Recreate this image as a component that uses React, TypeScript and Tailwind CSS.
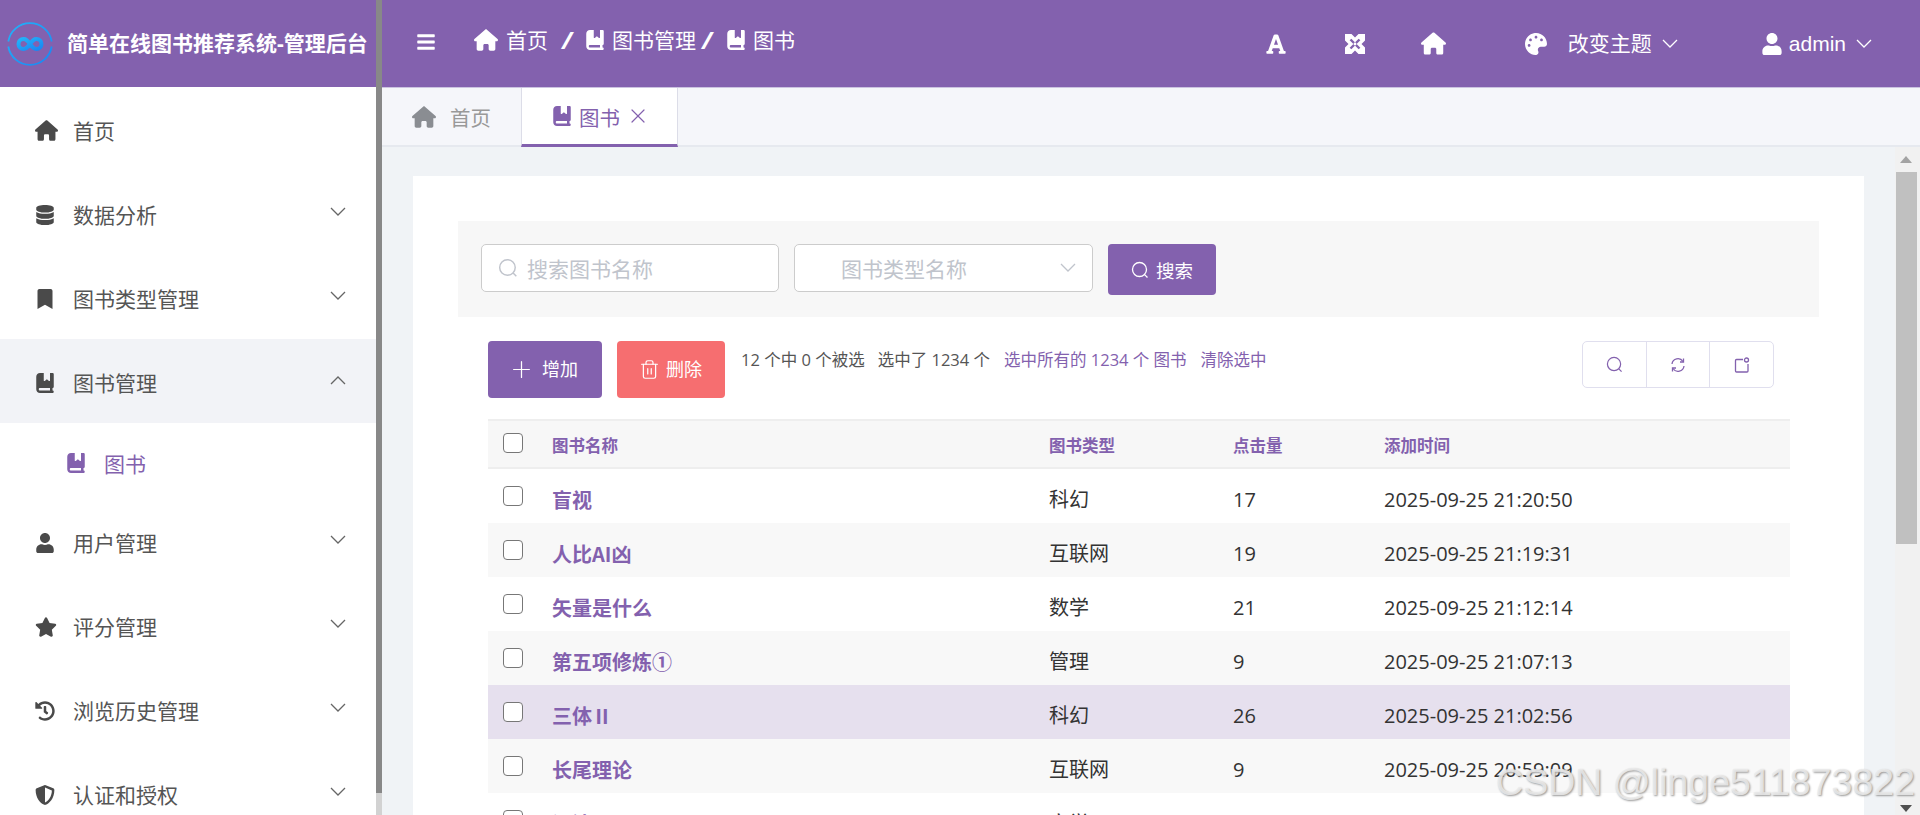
import { useId } from 'react';
import { FaDatabase, FaBookmark, FaUser, FaStar, FaHistory, FaShieldAlt, FaBars, FaFont, FaPalette } from 'react-icons/fa';
import { FaBookBookmark, FaHouse } from 'react-icons/fa6';
import { Plus, Trash2, X } from 'lucide-react';

function Chevron({ up, className }: { up?: boolean; className?: string }) {
  return (
    <svg width="16" height="10" viewBox="0 0 16 10" fill="none" stroke="currentColor" strokeWidth="1.3" className={className}>
      <polyline points={up ? '1,9 8,2 15,9' : '1,1 8,8 15,1'} />
    </svg>
  );
}

function SearchGlyph({ size = 18, className }: { size?: number; className?: string }) {
  return (
    <svg width={size} height={size} viewBox="0 0 18 18" fill="none" stroke="currentColor" strokeWidth="1.3" className={className}>
      <circle cx="8.5" cy="8.5" r="7" />
      <line x1="13.6" y1="13.6" x2="16.5" y2="16.5" />
    </svg>
  );
}

function ExpandIcon({ className }: { className?: string }) {
  return (
    <svg width="20" height="20" viewBox="0 0 20 20" className={className}>
      <rect x="0" y="0" width="20" height="20" fill="#fff" />
      <path d="M6.5 0H13.5L10 3.5ZM6.5 20H13.5L10 16.5ZM0 6.5V13.5L3.5 10ZM20 6.5V13.5L16.5 10Z" fill="#8361ae" />
      <path d="M5.5 5.5L14.5 14.5M14.5 5.5L5.5 14.5" stroke="#8361ae" strokeWidth="2.4" />
      <circle cx="10" cy="10" r="1.4" fill="#fff" />
    </svg>
  );
}

function Logo() {
  const id = useId();
  return (
    <svg width="46" height="46" viewBox="0 0 46 46" fill="none">
      <defs>
        <linearGradient id={id} x1="0" y1="0" x2="1" y2="1">
          <stop offset="0" stopColor="#22b4fa" />
          <stop offset="1" stopColor="#1a86f2" />
        </linearGradient>
      </defs>
      <path d="M1.3 20.5A22 22 0 0 1 44.7 20.5M44.7 25.5A22 22 0 0 1 1.3 25.5" stroke={`url(#${id})`} strokeWidth="1.8" />
      <path d="M23 23C20 19 19 18 16.5 18A5 5 0 0 0 16.5 28C19 28 20 27 23 23C26 19 27 18 29.5 18A5 5 0 0 1 29.5 28C27 28 26 27 23 23Z" stroke={`url(#${id})`} strokeWidth="4" />
    </svg>
  );
}

const menu = [
  { label: '首页', icon: FaHouse, size: 23 },
  { label: '数据分析', icon: FaDatabase, size: 20, arrow: true },
  { label: '图书类型管理', icon: FaBookmark, size: 20, arrow: true },
  { label: '图书管理', icon: FaBookBookmark, size: 20, arrow: true, open: true },
  { label: '用户管理', icon: FaUser, size: 20, arrow: true },
  { label: '评分管理', icon: FaStar, size: 22, arrow: true },
  { label: '浏览历史管理', icon: FaHistory, size: 20, arrow: true },
  { label: '认证和授权', icon: FaShieldAlt, size: 20, arrow: true },
];

const rows = [
  ['盲视', '科幻', '17', '2025-09-25 21:20:50'],
  ['人比AI凶', '互联网', '19', '2025-09-25 21:19:31'],
  ['矢量是什么', '数学', '21', '2025-09-25 21:12:14'],
  ['第五项修炼①', '管理', '9', '2025-09-25 21:07:13'],
  ['三体Ⅱ', '科幻', '26', '2025-09-25 21:02:56'],
  ['长尾理论', '互联网', '9', '2025-09-25 20:59:09'],
  ['混沌', '文学', '20', '2025-09-25 20:50:55'],
];

function Sidebar() {
  return (
    <div className="w-[382px] h-full flex shrink-0">
      <div className="w-[376px] h-full flex flex-col bg-white overflow-hidden">
        <div className="h-[87px] shrink-0 bg-[#8361ae] flex items-center pl-[7px]">
          <Logo />
          <span className="ml-[14px] text-[21px] font-bold text-white whitespace-nowrap">简单在线图书推荐系统-管理后台</span>
        </div>
        {menu.map((m) => (
          <div key={m.label} className="shrink-0">
            <div className={`h-[84px] flex items-center pl-[35px] pr-[30px] pt-[3px] text-[#555] ${m.open ? 'bg-[#f2f3f7]' : ''}`}>
              <span className="w-[38px] flex text-[#4a4a4a]"><m.icon size={m.size} /></span>
              <span className="text-[21px] mt-[3px]">{m.label}</span>
              {m.arrow && <Chevron up={m.open} className="ml-auto -mt-[6px] text-[#666]" />}
            </div>
            {m.open && (
              <div className="h-[76px] flex items-center pl-[66px] pt-[4px] text-[#8361ae]">
                <span className="w-[38px] flex"><FaBookBookmark size={20} /></span>
                <span className="text-[21px] mt-[4px]">图书</span>
              </div>
            )}
          </div>
        ))}
      </div>
      <div className="w-[6px] h-full flex flex-col">
        <div className="h-[793px] bg-[#888]" />
        <div className="flex-1 bg-[#d2d2d2]" />
      </div>
    </div>
  );
}

function TopBar() {
  return (
    <div className="h-[87px] shrink-0 bg-[#8361ae] text-white flex items-center pb-[4px]">
      <FaBars size={20} className="ml-[34px]" />
      <div className="ml-[38px] flex items-center text-[21px] -mt-[3px]">
        <FaHouse size={24} />
        <span className="ml-[8px] mt-[2px]">首页</span>
        <span className="ml-[14px] font-bold italic w-[23px] text-[24px]">/</span>
        <FaBookBookmark size={20} />
        <span className="ml-[7px] mt-[2px]">图书管理</span>
        <span className="ml-[6px] font-bold italic w-[24px] text-[24px]">/</span>
        <FaBookBookmark size={20} />
        <span className="ml-[7px] mt-[2px]">图书</span>
      </div>
      <div className="ml-auto flex items-center pt-[4px]">
        <FaFont size={22} />
        <ExpandIcon className="ml-[58px]" />
        <FaHouse size={25} className="ml-[56px]" />
        <FaPalette size={22} className="ml-[79px]" />
        <span className="ml-[21px] text-[21px]">改变主题</span>
        <Chevron className="ml-[10px]" />
        <FaUser size={22} className="ml-[83px]" />
        <span className="ml-[6px] text-[21px] font-['Liberation_Sans',sans-serif]">admin</span>
        <Chevron className="ml-[10px] mr-[48px]" />
      </div>
    </div>
  );
}

function Tabs() {
  return (
    <div className="h-[60px] shrink-0 bg-[#f5f6fa] border-t border-[#cbc3e0] border-b-2 border-b-[#e6e9ef] flex">
      <div className="w-[139px] flex items-center pl-[30px] text-[#999]">
        <FaHouse size={24} className="text-[#8a8d92]" />
        <span className="ml-[14px] text-[20.5px] mt-[4px]">首页</span>
      </div>
      <div className="w-[157px] h-[59px] bg-white border-x border-[#dcdde8] border-b-[3px] border-b-[#8361ae] flex items-center pl-[30px] text-[#8361ae]">
        <FaBookBookmark size={20} />
        <span className="ml-[7px] text-[20.5px] mt-[4px]">图书</span>
        <X size={24} strokeWidth={1.2} className="ml-[6px]" />
      </div>
    </div>
  );
}

function SearchPanel() {
  return (
    <div className="h-[96px] bg-[#f7f7f7] flex items-start pt-[23px] pl-[23px]">
      <div className="w-[298px] h-[48px] bg-white border border-[#ccc] rounded-[5px] flex items-center pl-[16px] text-[#c0c4cc]">
        <SearchGlyph size={20} />
        <span className="ml-[9px] text-[21px] mt-[4px]">搜索图书名称</span>
      </div>
      <div className="ml-[15px] w-[299px] h-[48px] bg-white border border-[#ccc] rounded-[5px] flex items-center pl-[46px] pr-[16px] text-[#c0c4cc]">
        <span className="text-[21px] mt-[4px]">图书类型名称</span>
        <Chevron className="ml-auto" />
      </div>
      <div className="ml-[15px] w-[108px] h-[51px] bg-[#8361ae] rounded-[4px] flex items-center pl-[23px] text-white">
        <SearchGlyph />
        <span className="ml-[7px] text-[18.5px] mt-[2px]">搜索</span>
      </div>
    </div>
  );
}

function Toolbar() {
  return (
    <div className="mt-[24px] pl-[30px] pr-[45px] flex items-start">
      <div className="w-[114px] h-[57px] bg-[#8361ae] rounded-[4px] flex items-center pl-[20px] text-white">
        <Plus size={27} strokeWidth={1.1} />
        <span className="ml-[7px] text-[18px]">增加</span>
      </div>
      <div className="ml-[15px] w-[108px] h-[57px] bg-[#f66e70] rounded-[4px] flex items-center pl-[22px] text-white">
        <Trash2 size={21} strokeWidth={1.4} />
        <span className="ml-[6px] text-[18px]">删除</span>
      </div>
      <div className="ml-[16px] mt-[7px] text-[16.5px] leading-[24px] text-[#555] whitespace-nowrap">
        12 个中 0 个被选<span className="ml-[13px]">选中了 1234 个</span>
        <span className="ml-[14px] text-[#8361ae]">选中所有的 1234 个 图书</span>
        <span className="ml-[14px] text-[#8361ae]">清除选中</span>
      </div>
      <div className="ml-auto w-[192px] h-[47px] border border-[#e0dfee] rounded-[5px] flex text-[#8361ae]">
        <div className="w-[64px] border-r border-[#e0dfee] flex items-center justify-center"><SearchGlyph size={17} /></div>
        <div className="w-[63px] border-r border-[#e0dfee] flex items-center justify-center">
          <svg width="16" height="16" viewBox="0 0 16 16" fill="none" stroke="currentColor" strokeWidth="1.3">
            <path d="M2 7A6 6 0 0 1 13 4.5M14 9A6 6 0 0 1 3 11.5" />
            <path d="M13.5 1.5V5H10M2.5 14.5V11H6" />
          </svg>
        </div>
        <div className="flex-1 flex items-center justify-center">
          <svg width="16" height="16" viewBox="0 0 16 16" fill="none" stroke="currentColor" strokeWidth="1.3">
            <path d="M9 2.5H2.5A1 1 0 0 0 1.5 3.5V14A1 1 0 0 0 2.5 15H13A1 1 0 0 0 14 14V7" />
            <circle cx="12.5" cy="3" r="2" />
          </svg>
        </div>
      </div>
    </div>
  );
}

function Checkbox() {
  return <span className="block w-[20px] h-[20px] bg-white border-[1.5px] border-[#777] rounded-[4px]" />;
}

function Table() {
  return (
    <div className="mt-[22px] ml-[30px] mr-[29px]">
      <div className="h-[50px] grid grid-cols-[64px_497px_184px_151px_1fr] bg-[#f7f7f7] border-y-2 border-[#eee] pt-[4px] items-center text-[16.5px] font-bold text-[#8361ae]">
        <span className="pl-[15px] -mt-[7px]"><Checkbox /></span>
        <span>图书名称</span>
        <span>图书类型</span>
        <span>点击量</span>
        <span>添加时间</span>
      </div>
      {rows.map((r, i) => (
        <div
          key={r[0]}
          className={`h-[54px] grid grid-cols-[64px_497px_184px_151px_1fr] pt-[7px] items-center text-[20px] text-[#333] ${
            i === 4 ? 'bg-[#e6e0ee]' : i % 2 === 1 ? 'bg-[#f8f8f8]' : 'bg-white'
          }`}
        >
          <span className="pl-[15px] -mt-[7px]"><Checkbox /></span>
          <span className="font-bold text-[#8361ae] font-['Noto_Sans_CJK_SC',sans-serif]">{r[0]}</span>
          <span>{r[1]}</span>
          <span>{r[2]}</span>
          <span>{r[3]}</span>
        </div>
      ))}
    </div>
  );
}

function PageScrollbar() {
  return (
    <div className="w-[25px] shrink-0 bg-[#f1f1f1] flex flex-col items-center pr-[3px] relative">
      <div className="h-[25px] flex items-center justify-center">
        <span className="w-0 h-0 border-x-[6px] border-x-transparent border-b-[7px] border-b-[#a3a3a3]" />
      </div>
      <div className="w-[21px] h-[372px] bg-[#c0c0c0]" />
      <div className="mt-auto h-[10px]">
        <span className="block w-0 h-0 border-x-[6px] border-x-transparent border-t-[7px] border-t-[#505050]" />
      </div>
    </div>
  );
}

export default function App() {
  return (
    <div className="relative w-[1920px] h-[815px] flex overflow-hidden bg-white font-['Open_Sans','Noto_Sans_CJK_SC',sans-serif]">
      <Sidebar />
      <div className="flex-1 min-w-0 flex flex-col">
        <TopBar />
        <Tabs />
        <div className="flex-1 min-h-0 flex bg-[#f0f3f6]">
          <div className="flex-1 min-w-0 px-[31px] pt-[29px] overflow-hidden">
            <div className="h-[700px] bg-white pt-[45px] px-[45px]">
              <SearchPanel />
              <Toolbar />
              <div className="-mt-[1px]">
                <Table />
              </div>
            </div>
          </div>
          <PageScrollbar />
        </div>
      </div>
      <div className="absolute right-[5px] bottom-[14px] text-[37.5px] leading-none text-[#ececec]/85 font-['Liberation_Sans',sans-serif] [text-shadow:1px_1px_2px_#999] whitespace-nowrap">
        CSDN @linge511873822
      </div>
    </div>
  );
}
